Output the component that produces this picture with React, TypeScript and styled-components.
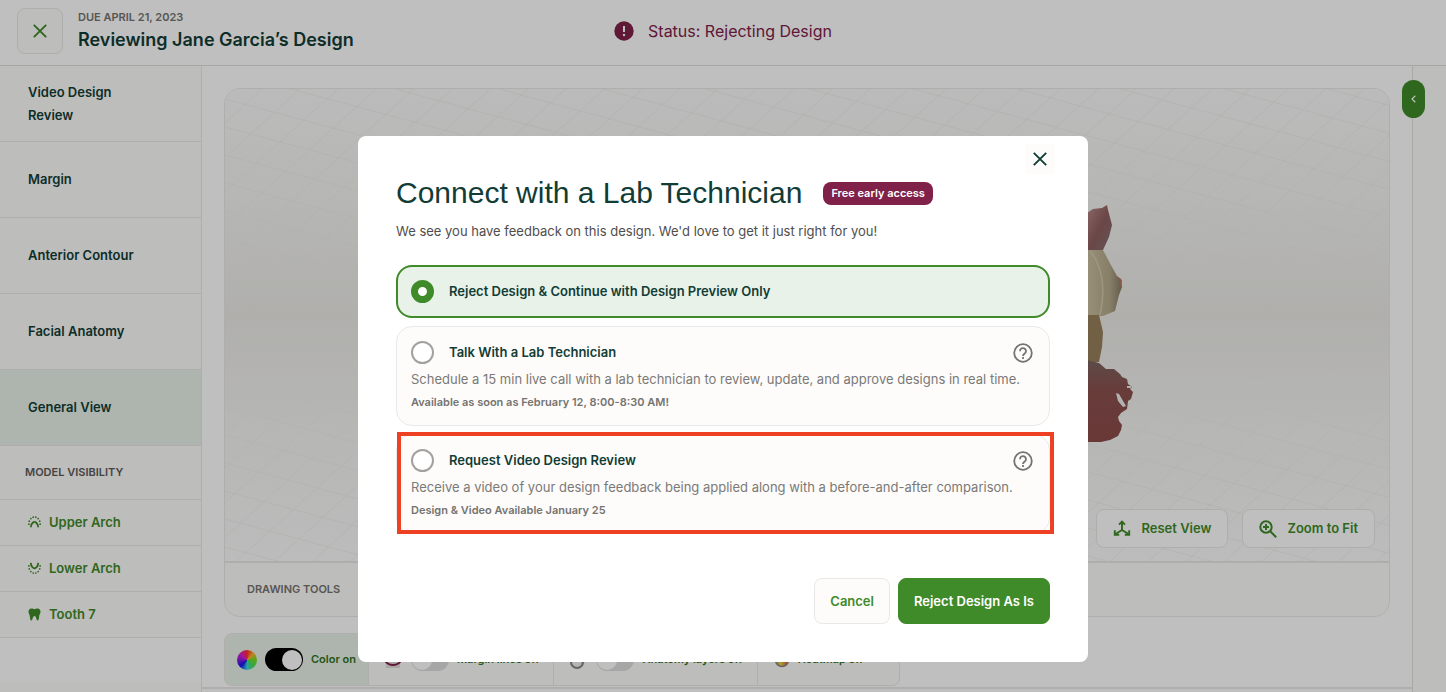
import React, { useState } from "react";
import styled, { createGlobalStyle, css } from "styled-components";

const GlobalStyle = createGlobalStyle`
  *, *::before, *::after { box-sizing: border-box; }
  body {
    margin: 0;
    background: #ffffff;
    color: #123c36;
    font-family: Inter, "Liberation Sans", sans-serif;
    font-size: 13px;
    line-height: 23px;
  }
  button, input { font: inherit; margin: 0; }
  h1, h2, p { margin: 0; }
`;

const line = "#eae8e6";
const cream = "#fdfcfa";
const green = "#3f8a29";
const mint = "#e8f2e9";
const plum = "#80214a";

const Page = styled.div`
  display: flex;
  flex-direction: column;
  height: 100vh;
  min-height: 600px;
  overflow: hidden;
`;

const Header = styled.header`
  display: grid;
  grid-template-columns: 1fr auto 1fr;
  align-items: center;
  padding: 8px 17px 11px;
  border-bottom: 1px solid #e0dfde;
`;

const HeaderLeft = styled.div`
  display: flex;
  align-items: center;
  gap: 15px;
`;

const SquareButton = styled.button`
  display: flex;
  align-items: center;
  justify-content: center;
  width: 46px;
  height: 46px;
  padding: 0;
  border: 1px solid ${line};
  border-radius: 8px;
  background: ${cream};
  color: ${green};
`;

const Due = styled.p`
  font-size: 11px;
  font-weight: 600;
  line-height: 18px;
  color: #757370;
`;

const PageTitle = styled.h1`
  font-size: 18px;
  font-weight: 600;
  line-height: 28px;
`;

const Status = styled.p`
  display: flex;
  align-items: center;
  gap: 14px;
  font-size: 16px;
  color: ${plum};
`;

const Body = styled.div`
  display: flex;
  flex: 1;
  min-height: 0;
`;

const Sidebar = styled.nav`
  display: flex;
  flex-direction: column;
  flex: 0 0 202px;
  border-right: 1px solid ${line};
`;

const StepButton = styled.button<{ $active?: boolean }>`
  height: 76px;
  padding: 0 60px 0 28px;
  border: 0;
  border-bottom: 1px solid ${line};
  background: ${(p) => (p.$active ? mint : cream)};
  color: inherit;
  font-weight: 600;
  text-align: left;
`;

const SidebarHeading = styled.h2`
  padding: 15px 25px;
  border-bottom: 1px solid ${line};
  background: ${cream};
  color: #5c5a58;
  font-size: 11px;
  font-weight: 600;
  line-height: 23px;
`;

const ModelButton = styled.button`
  display: flex;
  align-items: center;
  gap: 8px;
  height: 46px;
  padding: 0 28px;
  border: 0;
  border-bottom: 1px solid ${line};
  background: ${cream};
  color: ${green};
  font-weight: 600;
`;

const SidebarFoot = styled.div`
  height: 10px;
  margin-top: auto;
  background: ${cream};
`;

const Main = styled.main`
  display: flex;
  flex-direction: column;
  flex: 1;
  min-width: 0;
  padding-top: 22px;
`;

const Viewer = styled.section`
  display: flex;
  flex-direction: column;
  flex: 1;
  min-height: 0;
  margin: 0 22px;
  overflow: hidden;
  border: 1px solid ${line};
  border-radius: 16px;
`;

const Scene = styled.div`
  position: relative;
  display: flex;
  flex: 1;
  align-items: flex-end;
  justify-content: flex-end;
  gap: 14px;
  padding: 0 14px 13px;
  min-height: 0;
  background: linear-gradient(#fafafa 0%, #f3f3f1 25%, #ebeae6 48%, #f3f3f1 70%, #fbfbfb 100%);
`;

const SceneArt = styled.svg`
  position: absolute;
  inset: 0;
  width: 100%;
  height: 100%;
`;

const SceneButton = styled.button`
  position: relative;
  display: flex;
  align-items: center;
  gap: 10px;
  height: 39px;
  padding: 0 16px;
  border: 1px solid ${line};
  border-radius: 8px;
  background: #ffffff;
  color: ${green};
  font-weight: 600;
`;

const DrawingTools = styled.div`
  padding: 15px 22px;
  border-top: 2px solid ${line};
  background: ${cream};
  color: #757370;
  font-size: 11px;
  font-weight: 600;
`;

const LayerBar = styled.div`
  display: flex;
  align-self: flex-start;
  height: 53px;
  margin: 16px 22px 1px;
  overflow: hidden;
  border-radius: 8px;
  border: 1px solid ${line};
  background: ${cream};
`;

const Layer = styled.label<{ $on?: boolean }>`
  display: flex;
  align-items: center;
  gap: 8px;
  padding: 0 ${(p) => (p.$on ? "12px" : "14px")};
  background: ${(p) => (p.$on ? mint : "transparent")};
  color: #2f7320;
  font-size: 11px;
  font-weight: 600;
  white-space: nowrap;

  & + & { border-left: 1px solid ${line}; }
  &:last-child { padding-right: 36px; padding-left: 16px; }
`;

const Switch = styled.input`
  appearance: none;
  display: flex;
  align-items: center;
  width: 38px;
  height: 23px;
  padding: 1px;
  border-radius: 12px;
  background: #dedede;

  &::before {
    content: "";
    width: 20px;
    height: 20px;
    border-radius: 50%;
    background: #ffffff;
  }
  &:checked { background: #000000; justify-content: flex-end; }
`;

const BottomStrip = styled.div`
  height: 5px;
  border-top: 2px solid ${line};
`;

const Rail = styled.aside`
  display: flex;
  justify-content: center;
  flex: 0 0 34px;
  padding-top: 14px;
  border-left: 1px solid #e0dfde;
  background: ${cream};
`;

const RailToggle = styled.button`
  position: absolute;
  right: 21px;
  display: flex;
  align-items: center;
  justify-content: center;
  width: 23px;
  height: 38px;
  padding: 0;
  border: 0;
  border-radius: 12px;
  background: ${green};
  color: #ffffff;
`;

const Backdrop = styled.div`
  position: fixed;
  inset: 0;
  display: flex;
  align-items: flex-start;
  justify-content: center;
  padding: 136px 24px 0;
  overflow: hidden;
  background: rgba(0, 0, 0, 0.25);
`;

const Dialog = styled.section`
  width: 100%;
  max-width: 730px;
  padding: 8px 38px 38px;
  border-radius: 8px;
  background: #ffffff;
`;

const CloseRow = styled.div`
  display: flex;
  justify-content: flex-end;
  margin-right: -5px;
`;

const CloseButton = styled.button`
  display: flex;
  align-items: center;
  justify-content: center;
  width: 30px;
  height: 30px;
  padding: 0;
  border: 0;
  border-radius: 2px;
  background: ${cream};
  color: #123c36;
`;

const TitleRow = styled.div`
  display: flex;
  align-items: center;
  gap: 21px;
`;

const DialogTitle = styled.h2`
  font-family: "Liberation Sans", Arial, sans-serif;
  font-size: 30px;
  font-weight: 400;
  line-height: 38px;
`;

const Badge = styled.span`
  padding: 0 8px;
  border-radius: 8px;
  background: ${plum};
  color: #ffffff;
  font-size: 11px;
  font-weight: 600;
`;

const Intro = styled.p`
  margin-top: 8px;
  color: #4f4e4c;
`;

const Options = styled.fieldset`
  display: flex;
  flex-direction: column;
  gap: 8px;
  min-width: 0;
  margin: 22px 0 0;
  padding: 0;
  border: 0;
`;

const Option = styled.div<{ $selected?: boolean }>`
  position: relative;
  padding: 14px 14px 11px;
  border: 1px solid #ebe9e7;
  border-radius: 16px;
  background: ${cream};
  ${(p) =>
    p.$selected &&
    css`
      padding: 13px;
      border: 2px solid ${green};
      background: ${mint};
    `}
`;

const Highlight = styled.span`
  position: absolute;
  inset: -3px -5px -1px 0;
  border: 4px solid #ee4023;
  pointer-events: none;
`;

const OptionHead = styled.div`
  display: flex;
  align-items: center;
  justify-content: space-between;
`;

const OptionLabel = styled.label`
  display: flex;
  align-items: center;
  gap: 15px;
  font-weight: 600;
`;

const Radio = styled.input`
  appearance: none;
  width: 23px;
  height: 23px;
  border: 2px solid #a3a19f;
  border-radius: 50%;
  background: #ffffff;

  &:checked { border: 7px solid ${green}; }
`;

const HelpButton = styled.button`
  display: flex;
  margin-right: 2px;
  padding: 0;
  border: 0;
  background: none;
  color: #757370;
`;

const OptionText = styled.p`
  margin-top: 4px;
  color: #7b7977;
`;

const OptionNote = styled.p`
  color: #757370;
  font-size: 11px;
  font-weight: 600;
`;

const Actions = styled.div`
  display: flex;
  justify-content: flex-end;
  gap: 8px;
  margin-top: 44px;
`;

const ActionButton = styled.button<{ $primary?: boolean }>`
  height: 46px;
  padding: 0 15px;
  border: 1px solid ${(p) => (p.$primary ? green : line)};
  border-radius: 8px;
  background: ${(p) => (p.$primary ? green : cream)};
  color: ${(p) => (p.$primary ? "#ffffff" : green)};
  font-weight: 600;
`;

const CrossIcon = () => (
  <svg width="14" height="14" viewBox="0 0 14 14" fill="none" stroke="currentColor" strokeWidth="1.900" aria-hidden="true">
    <path d="M.8.8l12.400 12.400M13.200.8L.8 13.200" />
  </svg>
);

const AlertIcon = () => (
  <svg width="20" height="20" viewBox="0 0 20 20" aria-hidden="true">
    <circle cx="10" cy="10" r="9.700" fill={plum} />
    <path d="M10 5v6" stroke="#fff" strokeWidth="2" />
    <circle cx="10" cy="14" r="1.2" fill="#fff" />
  </svg>
);

const HelpIcon = () => (
  <svg width="20" height="20" viewBox="0 0 20 20" fill="none" stroke="currentColor" strokeWidth="1.8" aria-hidden="true">
    <circle cx="10" cy="10" r="8.8" />
    <path d="M7 8.2a3 3 0 1 1 4.9 2.2C10.800 11.200 10 11.700 10 13" />
    <path d="M10 14v1.900" />
  </svg>
);

const archDots = [[1, 9.500], [1.500, 6], [3.300, 3], [6, 1.300], [9, 1.300], [11.700, 3], [13.500, 6], [14, 9.500]];

const ArchIcon = ({ lower }: { lower?: boolean }) => (
  <svg width="13" height="13" viewBox="0 0 15 15" aria-hidden="true">
    <g transform={lower ? "matrix(1 0 0 -1 0 14)" : undefined} fill="currentColor">
      {archDots.map(([x, y]) => (
        <circle key={x} cx={x} cy={y} r="1" />
      ))}
      <path d="M3.200 13c.1-2.600.8-4 2-5 .6-.5 1.400-1.300 2.300-1.300s1.700.8 2.300 1.300c1.200 1 1.900 2.400 2 5" fill="none" stroke="currentColor" strokeWidth="2.100" />
    </g>
  </svg>
);

const ToothIcon = () => (
  <svg width="13" height="13" viewBox="0 0 13 13" fill="currentColor" aria-hidden="true">
    <path d="M3.500.5C5 .5 5.300 1.200 6.500 1.200S8 .5 9.500.5c2 0 3 1.400 3 3.300 0 1.700-1.100 2.600-1.300 4.200-.2 1.800-.3 4.500-1.600 4.500-1.500 0-1-4.500-3.100-4.500s-1.600 4.500-3.100 4.500C2.100 12.500 2 9.800 1.800 8 1.600 6.400.5 5.500.5 3.800.5 1.900 1.500.5 3.500.5z" />
  </svg>
);

const AxesIcon = () => (
  <svg width="18" height="18" viewBox="0 0 18 18" fill="none" stroke="currentColor" strokeWidth="1.900" aria-hidden="true">
    <path d="M9 2v8L2.500 14M9 10l6.500 4" />
    <path d="M6 4.700L9 1.700l3 3M1.800 10.300v4.400h4.400M16.200 10.300v4.400h-4.400" />
  </svg>
);

const ZoomIcon = () => (
  <svg width="18" height="18" viewBox="0 0 18 18" fill="none" stroke="currentColor" strokeWidth="2" aria-hidden="true">
    <circle cx="7" cy="7" r="5.700" />
    <path d="M11.200 11.200l6 6M7 4v6M4 7h6" />
  </svg>
);

const ChevronIcon = () => (
  <svg width="5" height="8" viewBox="0 0 5 8" fill="none" stroke="currentColor" strokeWidth="1.200" aria-hidden="true">
    <path d="M4.300.8L1 4l3.300 3.200" />
  </svg>
);

const ColorWheel = styled.span`
  width: 20px;
  height: 20px;
  border-radius: 50%;
  background: conic-gradient(#ff2a2a, #ffb02a, #6ee02a, #46e05a, #3ad7e0, #1414f0, #8b1ce0, #e01cc8, #ff2a2a);
`;

const MarginIcon = () => (
  <svg width="20" height="20" viewBox="0 0 20 20" aria-hidden="true">
    <rect x="3" y="1" width="14" height="17" fill="#e3dede" />
    <ellipse cx="10" cy="9" rx="8" ry="6" fill="none" stroke={plum} strokeWidth="2" />
  </svg>
);

const AnatomyIcon = () => (
  <svg width="20" height="20" viewBox="0 0 20 20" fill="none" stroke="#8a8886" strokeWidth="2" aria-hidden="true">
    <circle cx="9" cy="12" r="6" fill="#f1f1f1" />
    <path d="M14 14l4-6" />
  </svg>
);

const HeatmapIcon = () => (
  <svg width="16" height="20" viewBox="0 0 16 20" aria-hidden="true">
    <defs>
      <linearGradient id="heat">
        <stop offset="0" stopColor="#6fae4a" />
        <stop offset=".4" stopColor="#f1d245" />
        <stop offset="1" stopColor="#d8452f" />
      </linearGradient>
    </defs>
    <circle cx="8" cy="10" r="6.500" fill="url(#heat)" stroke="#8a8886" strokeWidth="1.500" />
  </svg>
);

const range = (n: number) => Array.from({ length: n }, (_, i) => i);

const SceneDrawing = () => (
  <SceneArt aria-hidden="true">
    <defs>
      <linearGradient id="fade" x1="0" x2="0" y1="0" y2="1">
        <stop offset="0" stopColor="#fff" />
        <stop offset=".25" stopColor="#fff" stopOpacity=".6" />
        <stop offset=".4" stopColor="#fff" stopOpacity="0" />
        <stop offset=".58" stopColor="#fff" stopOpacity="0" />
        <stop offset=".8" stopColor="#fff" stopOpacity=".7" />
        <stop offset="1" stopColor="#fff" />
      </linearGradient>
      <mask id="fadeMask">
        <rect width="100%" height="100%" fill="url(#fade)" />
      </mask>
      <linearGradient id="gum" x1="0" x2="1" y1="0" y2="1">
        <stop offset="0" stopColor="#b98a8c" />
        <stop offset=".5" stopColor="#8f5f5e" />
        <stop offset="1" stopColor="#857076" />
      </linearGradient>
      <linearGradient id="crown" x1="0" x2="1" y1="0" y2="0">
        <stop offset="0" stopColor="#cbc0a2" />
        <stop offset=".65" stopColor="#b5a98c" />
        <stop offset="1" stopColor="#857a66" />
      </linearGradient>
      <linearGradient id="lowerGum" x1="0" x2="0" y1="0" y2="1">
        <stop offset="0" stopColor="#7c6560" />
        <stop offset=".35" stopColor="#8a514e" />
        <stop offset="1" stopColor="#8c4b49" />
      </linearGradient>
    </defs>
    <g mask="url(#fadeMask)" stroke="#dedcd5" strokeOpacity=".32" strokeWidth="1">
      {range(90).map((i) => (
        <line key={`a${i}`} x1="0" y1={10 + 28 * (i - 40)} x2="3000" y2={820 + 28 * (i - 40)} />
      ))}
      {range(90).map((i) => (
        <line key={`b${i}`} x1={37 + 38 * i} y1="0" x2={37 + 38 * i - 1100} y2="1000" />
      ))}
    </g>
    <svg x="50%" overflow="visible">
      <g transform="translate(280 110)">
        <path d="M0 14l6-4 9-1 5-3 1 5 4 15-3 12-6 13-16 2z" fill="url(#gum)" />
        <path d="M0 51h16l9 17 5 9 4 3 1 8-3 8-4 16-12 5H0z" fill="url(#crown)" />
        <path d="M3 52c12 14 16 38 10 64" fill="none" stroke="#d3c9ae" strokeWidth="1.500" />
        <path d="M31 78l4 3-1 9z" fill="#b4785f" />
        <path d="M0 116h12l4 17-1 15-3 15H0z" fill="#97805b" />
        <path d="M0 161l12 3 7 6 8 0 6 5 2 3 5 2 1 5 4 3-2 2 3 3-2 7-3 2-1 8-6 4-3 4 1 4 3 4-1 5-3 6-8 4-9 2H0z" fill="url(#lowerGum)" />
        <path d="M29 194l3 1 7 12-3 1-5-6zM40 187h4v2h-4z" fill="#eeeeee" />
      </g>
    </svg>
  </SceneArt>
);

const steps = ["Video Design Review", "Margin", "Anterior Contour", "Facial Anatomy", "General View"];

const options = [
  { id: "reject", title: "Reject Design & Continue with Design Preview Only" },
  {
    id: "talk",
    title: "Talk With a Lab Technician",
    text: "Schedule a 15 min live call with a lab technician to review, update, and approve designs in real time.",
    note: "Available as soon as February 12, 8:00-8:30 AM!",
  },
  {
    id: "video",
    title: "Request Video Design Review",
    text: "Receive a video of your design feedback being applied along with a before-and-after comparison.",
    note: "Design & Video Available January 25",
    highlighted: true,
  },
];

export default function App() {
  const [choice, setChoice] = useState("reject");

  return (
    <>
      <GlobalStyle />
      <Page>
        <Header>
          <HeaderLeft>
            <SquareButton aria-label="Close review">
              <CrossIcon />
            </SquareButton>
            <div>
              <Due>DUE APRIL 21, 2023</Due>
              <PageTitle>Reviewing Jane Garcia’s Design</PageTitle>
            </div>
          </HeaderLeft>
          <Status>
            <AlertIcon />
            Status: Rejecting Design
          </Status>
        </Header>
        <Body>
          <Sidebar>
            {steps.map((step) => (
              <StepButton key={step} $active={step === "General View"}>
                {step}
              </StepButton>
            ))}
            <SidebarHeading>MODEL VISIBILITY</SidebarHeading>
            <ModelButton>
              <ArchIcon />
              Upper Arch
            </ModelButton>
            <ModelButton>
              <ArchIcon lower />
              Lower Arch
            </ModelButton>
            <ModelButton>
              <ToothIcon />
              Tooth 7
            </ModelButton>
            <SidebarFoot />
          </Sidebar>
          <Main>
            <Viewer>
              <Scene>
                <SceneDrawing />
                <SceneButton>
                  <AxesIcon />
                  Reset View
                </SceneButton>
                <SceneButton>
                  <ZoomIcon />
                  Zoom to Fit
                </SceneButton>
              </Scene>
              <DrawingTools>DRAWING TOOLS</DrawingTools>
            </Viewer>
            <LayerBar>
              <Layer $on>
                <ColorWheel />
                <Switch type="checkbox" defaultChecked />
                Color on
              </Layer>
              <Layer>
                <MarginIcon />
                <Switch type="checkbox" />
                Margin lines off
              </Layer>
              <Layer>
                <AnatomyIcon />
                <Switch type="checkbox" />
                Anatomy layers off
              </Layer>
              <Layer as="div">
                <HeatmapIcon />
                Heatmap off
              </Layer>
            </LayerBar>
            <BottomStrip />
          </Main>
          <Rail>
            <RailToggle aria-label="Expand panel">
              <ChevronIcon />
            </RailToggle>
          </Rail>
        </Body>
      </Page>
      <Backdrop>
        <Dialog role="dialog" aria-modal="true" aria-labelledby="dialog-title">
          <CloseRow>
            <CloseButton aria-label="Close dialog">
              <CrossIcon />
            </CloseButton>
          </CloseRow>
          <TitleRow>
            <DialogTitle id="dialog-title">Connect with a Lab Technician</DialogTitle>
            <Badge>Free early access</Badge>
          </TitleRow>
          <Intro>We see you have feedback on this design. We'd love to get it just right for you!</Intro>
          <Options>
            {options.map((option) => (
              <Option key={option.id} $selected={choice === option.id}>
                <OptionHead>
                  <OptionLabel>
                    <Radio
                      type="radio"
                      name="next-step"
                      checked={choice === option.id}
                      onChange={() => setChoice(option.id)}
                    />
                    {option.title}
                  </OptionLabel>
                  {option.text && (
                    <HelpButton aria-label={`About ${option.title}`}>
                      <HelpIcon />
                    </HelpButton>
                  )}
                </OptionHead>
                {option.text && <OptionText>{option.text}</OptionText>}
                {option.note && <OptionNote>{option.note}</OptionNote>}
                {option.highlighted && <Highlight />}
              </Option>
            ))}
          </Options>
          <Actions>
            <ActionButton>Cancel</ActionButton>
            <ActionButton $primary>Reject Design As Is</ActionButton>
          </Actions>
        </Dialog>
      </Backdrop>
    </>
  );
}
